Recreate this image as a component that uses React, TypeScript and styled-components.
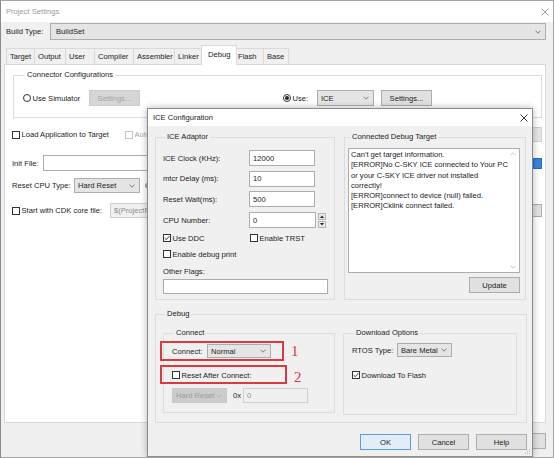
import React from "react";
import styled, { createGlobalStyle } from "styled-components";

const GlobalStyle = createGlobalStyle`
  html, body { margin: 0; padding: 0; background: #f0f0f0; }
  body {
    font-family: "Liberation Sans", Arial, sans-serif;
    font-size: 7.6px;
    color: #1b1b1b;
  }
  * { box-sizing: border-box; }
`;

/* ---------- window chrome ---------- */

const Window = styled.div`
  position: relative;
  width: 554px;
  height: 458px;
  border: 1px solid #a4a4a4;
  border-left-color: #8a8a8a;
  background: #f0f0f0;
  display: flex;
  flex-direction: column;
  overflow: hidden;
`;

const TitleBar = styled.div<{ $active?: boolean }>`
  flex: none;
  height: ${(p) => (p.$active ? 17 : 21)}px;
  display: flex;
  align-items: center;
  justify-content: space-between;
  padding: 0 4px 0 5px;
  background: #fff;
  color: ${(p) => (p.$active ? "#1b1b1b" : "#9a9a9a")};
`;

const CloseIcon = ({ color }: { color: string }) => (
  <svg width="8" height="8" viewBox="0 0 8 8">
    <path d="M0.5 0.5 L7.5 7.5 M7.5 0.5 L0.5 7.5" stroke={color} strokeWidth="0.9" />
  </svg>
);

const Chevron = ({ color = "#606060" }: { color?: string }) => (
  <svg width="6" height="4" viewBox="0 0 6 4">
    <path d="M0.5 0.7 L3 3.2 L5.5 0.7" stroke={color} strokeWidth="0.8" fill="none" />
  </svg>
);

/* ---------- common controls ---------- */

const Combo = styled.div<{ $w?: number; $h?: number; $disabled?: boolean }>`
  flex: ${(p) => (p.$w ? "none" : 1)};
  width: ${(p) => (p.$w ? `${p.$w}px` : "auto")};
  height: ${(p) => p.$h ?? 15}px;
  border: 1px solid ${(p) => (p.$disabled ? "#c9c9c9" : "#adadad")};
  background: ${(p) => (p.$disabled ? "#cccccc" : "#e5e5e5")};
  color: ${(p) => (p.$disabled ? "#9a9a9a" : "#1b1b1b")};
  display: flex;
  align-items: center;
  justify-content: space-between;
  padding: 0 4px 0 3px;
`;

const Field = styled.div<{ $w?: number; $h?: number; $disabled?: boolean; $mt?: number }>`
  flex: ${(p) => (p.$w ? "none" : 1)};
  width: ${(p) => (p.$w ? `${p.$w}px` : "auto")};
  height: ${(p) => p.$h ?? 16}px;
  margin-top: ${(p) => p.$mt ?? 0}px;
  border: 1px solid ${(p) => (p.$disabled ? "#cfcfcf" : "#abadb3")};
  background: ${(p) => (p.$disabled ? "#f0f0f0" : "#fff")};
  color: ${(p) => (p.$disabled ? "#8d8d8d" : "#1b1b1b")};
  display: flex;
  align-items: center;
  padding-left: 3px;
  white-space: nowrap;
  overflow: hidden;
`;

const Button = styled.div<{ $w?: number; $h?: number; $disabled?: boolean; $default?: boolean; $blue?: boolean }>`
  flex: none;
  width: ${(p) => p.$w ?? 51}px;
  height: ${(p) => p.$h ?? 16}px;
  border: 1px solid
    ${(p) => (p.$default ? "#5a9ee0" : p.$blue ? "#1f6fd0" : p.$disabled ? "#cccccc" : "#adadad")};
  background: ${(p) => (p.$default ? "#e3edf8" : p.$blue ? "#3a84dc" : p.$disabled ? "#d6d6d6" : "#e1e1e1")};
  color: ${(p) => (p.$disabled ? "#a3a3a3" : "#1b1b1b")};
  display: flex;
  align-items: center;
  justify-content: center;
`;

const Box = styled.span<{ $disabled?: boolean; $round?: boolean }>`
  flex: none;
  width: 8px;
  height: 8px;
  border: 1px solid ${(p) => (p.$disabled ? "#c4c4c4" : "#333")};
  border-radius: ${(p) => (p.$round ? "50%" : "0")};
  background: #fff;
  display: flex;
  align-items: center;
  justify-content: center;
`;

const Dot = styled.span`
  width: 4px;
  height: 4px;
  border-radius: 50%;
  background: #222;
`;

const Choice = styled.label<{ $disabled?: boolean; $w?: number; $mt?: number }>`
  flex: none;
  display: flex;
  align-items: center;
  gap: 1.5px;
  height: 10px;
  width: ${(p) => (p.$w ? `${p.$w}px` : "auto")};
  margin-top: ${(p) => p.$mt ?? 0}px;
  color: ${(p) => (p.$disabled ? "#a8a8a8" : "inherit")};
  white-space: nowrap;
`;

type ChoiceProps = { label: string; checked?: boolean; disabled?: boolean; w?: number; mt?: number };

const Check = ({ label, checked, disabled, w, mt }: ChoiceProps) => (
  <Choice $disabled={disabled} $w={w} $mt={mt}>
    <Box $disabled={disabled}>
      {checked && (
        <svg width="6" height="6" viewBox="0 0 6 6">
          <path d="M0.6 3.1 L2.3 4.7 L5.4 1.1" stroke="#222" strokeWidth="0.9" fill="none" />
        </svg>
      )}
    </Box>
    {label}
  </Choice>
);

const Radio = ({ label, checked, w }: ChoiceProps) => (
  <Choice $w={w}>
    <Box $round>{checked && <Dot />}</Box>
    {label}
  </Choice>
);

const Row = styled.div<{ $h?: number; $mt?: number; $gap?: number; $top?: boolean }>`
  display: flex;
  align-items: ${(p) => (p.$top ? "flex-start" : "center")};
  height: ${(p) => p.$h ?? 16}px;
  margin-top: ${(p) => p.$mt ?? 0}px;
  gap: ${(p) => p.$gap ?? 0}px;
`;

const Label = styled.span<{ $w?: number; $ml?: number }>`
  flex: none;
  width: ${(p) => (p.$w ? `${p.$w}px` : "auto")};
  margin-left: ${(p) => p.$ml ?? 0}px;
  white-space: nowrap;
`;

const Group = styled.fieldset<{ $w?: number; $h: number; $pad: string; $mt?: number; $ml?: number }>`
  flex: none;
  margin: ${(p) => p.$mt ?? 0}px 0 0 ${(p) => p.$ml ?? 0}px;
  width: ${(p) => (p.$w ? `${p.$w}px` : "auto")};
  height: ${(p) => p.$h}px;
  min-width: 0;
  padding: ${(p) => p.$pad};
  border: 1px solid #dcdcdc;
`;

const Legend = styled.legend`
  padding: 0 2px;
  margin-left: 2px;
  line-height: 10px;
`;

/* ---------- background window ---------- */

const BuildRow = styled.div`
  flex: none;
  display: flex;
  align-items: center;
  height: 17px;
  margin: 1px 7px 0 5px;
`;

const TabStrip = styled.div`
  flex: none;
  position: relative;
  z-index: 1;
  display: flex;
  align-items: flex-end;
  height: 19px;
  margin-top: 5px;
  padding-left: 5px;
`;

const Tab = styled.div<{ $w: number; $selected?: boolean }>`
  flex: none;
  width: ${(p) => p.$w + (p.$selected ? 4 : 0)}px;
  height: ${(p) => (p.$selected ? 20 : 16)}px;
  margin-left: ${(p) => (p.$selected ? -3 : -1)}px;
  margin-right: ${(p) => (p.$selected ? -2 : 0)}px;
  margin-bottom: ${(p) => (p.$selected ? -1 : 0)}px;
  padding: ${(p) => (p.$selected ? "0 0 2px 6px" : "0 0 0 3px")};
  border: 1px solid #d9d9d9;
  border-bottom: none;
  background: ${(p) => (p.$selected ? "#fff" : "#f0f0f0")};
  position: relative;
  z-index: ${(p) => (p.$selected ? 2 : 0)};
  display: flex;
  align-items: center;
  &:first-child {
    margin-left: 0;
  }
`;

const Panel = styled.div`
  flex: none;
  height: 359px;
  margin: 0 7px 0 3px;
  padding: 5px 3px 0 7px;
  background: #fff;
  border: 1px solid #d9d9d9;
  display: flex;
  flex-direction: column;
`;

const BottomBar = styled.div`
  display: flex;
  justify-content: flex-end;
  gap: 7px;
  margin-top: 10px;
  padding-right: 7px;
`;

const tabs = [
  { name: "Target", w: 29 },
  { name: "Output", w: 32 },
  { name: "User", w: 30 },
  { name: "Compiler", w: 40 },
  { name: "Assembler", w: 42 },
  { name: "Linker", w: 30 },
  { name: "Debug", w: 32, selected: true },
  { name: "Flash", w: 30 },
  { name: "Base", w: 26 },
];

/* ---------- ICE dialog ---------- */

const Dialog = styled.div`
  position: absolute;
  left: 146px;
  top: 107px;
  width: 386px;
  height: 349px;
  border: 1px solid #8c8c8c;
  background: #f0f0f0;
  box-shadow: 0 0 7px rgba(0, 0, 0, 0.3);
  display: flex;
  flex-direction: column;
  z-index: 5;
`;

const DialogBody = styled.div`
  flex: 1;
  padding: 6px 5px 0 7px;
  display: flex;
  flex-direction: column;
`;

const TopRow = styled.div`
  display: flex;
  gap: 9px;
`;

const FieldGrid = styled.div`
  display: grid;
  grid-template-columns: 86px auto;
  grid-auto-rows: 16px;
  row-gap: 4.7px;
  align-items: center;
`;

const Spin = styled.div`
  display: flex;
  flex-direction: column;
  gap: 1px;
  margin-left: 2px;
`;

const SpinButton = styled.div`
  width: 8px;
  height: 7px;
  border: 1px solid #b4b4b4;
  background: #e9e9e9;
  display: flex;
  align-items: center;
  justify-content: center;
`;

const TextArea = styled.div`
  position: relative;
  width: 172px;
  height: 125px;
  border: 1px solid #abadb3;
  background: #fff;
  padding: 1px 14px 0 2px;
  line-height: 10.3px;
  white-space: pre;
`;

const ScrollTrack = styled.div`
  position: absolute;
  right: 0;
  top: 0;
  bottom: 0;
  width: 12px;
  display: flex;
  flex-direction: column;
  justify-content: space-between;
  align-items: center;
  padding: 3px 0;
`;

const RightRow = styled.div`
  display: flex;
  justify-content: flex-end;
  width: 172px;
  margin-top: 4px;
`;

const ButtonRow = styled.div`
  display: flex;
  justify-content: flex-end;
  gap: 7px;
  margin-top: 11px;
`;

const Mark = styled.div<{ $l: number; $t: number; $w: number; $h: number }>`
  position: absolute;
  left: ${(p) => p.$l}px;
  top: ${(p) => p.$t}px;
  width: ${(p) => p.$w}px;
  height: ${(p) => p.$h}px;
  border: 2px solid #d93a3f;
  pointer-events: none;
`;

const MarkNumber = styled.div<{ $l: number; $t: number }>`
  position: absolute;
  left: ${(p) => p.$l}px;
  top: ${(p) => p.$t}px;
  font-family: "Liberation Serif", "Times New Roman", serif;
  font-size: 15px;
  line-height: 15px;
  color: #d93a3f;
`;

const Grip = styled.svg`
  position: absolute;
  right: 1px;
  bottom: 1px;
`;

const debugText = [
  "Can't get target information.",
  "[ERROR]No C-SKY ICE connected to Your PC",
  "or your C-SKY ICE driver not installed",
  "correctly!",
  "[ERROR]connect to device (null) failed.",
  "[ERROR]Cklink connect failed.",
].join("\n");

const Arrow = ({ up }: { up?: boolean }) => (
  <svg width="6" height="4" viewBox="0 0 6 4">
    <path d={up ? "M0.5 3.3 L3 0.8 L5.5 3.3" : "M0.5 0.7 L3 3.2 L5.5 0.7"} stroke="#b8b8b8" strokeWidth="0.8" fill="none" />
  </svg>
);

const Tri = ({ up }: { up?: boolean }) => (
  <svg width="4" height="3" viewBox="0 0 4 3">
    <path d={up ? "M0 3 L2 0.5 L4 3 Z" : "M0 0 L2 2.5 L4 0 Z"} fill="#222" />
  </svg>
);

const IceDialog = () => (
  <Dialog>
    <TitleBar $active>
      <span>ICE Configuration</span>
      <CloseIcon color="#222" />
    </TitleBar>
    <DialogBody>
      <TopRow>
        <Group $w={180} $h={168} $pad="8px 0 0 7px">
          <Legend>ICE Adaptor</Legend>
          <FieldGrid>
            <Label>ICE Clock (KHz):</Label>
            <Field $w={66}>12000</Field>
            <Label>mtcr Delay (ms):</Label>
            <Field $w={66}>10</Field>
            <Label>Reset Wait(ms):</Label>
            <Field $w={66}>500</Field>
            <Label>CPU Number:</Label>
            <Row>
              <Field $w={67}>0</Field>
              <Spin>
                <SpinButton>
                  <Tri up />
                </SpinButton>
                <SpinButton>
                  <Tri />
                </SpinButton>
              </Spin>
            </Row>
          </FieldGrid>
          <Row $h={10} $mt={5}>
            <Check label="Use DDC" checked w={87} />
            <Check label="Enable TRST" />
          </Row>
          <Check label="Enable debug print" mt={6} />
          <Row $h={10} $mt={7}>
            <Label>Other Flags:</Label>
          </Row>
          <Field $w={165} $h={15} $mt={3} />
        </Group>

        <Group $w={182} $h={168} $pad="6px 0 0 3px">
          <Legend>Connected Debug Target</Legend>
          <TextArea>
            {debugText}
            <ScrollTrack>
              <Arrow up />
              <Arrow />
            </ScrollTrack>
          </TextArea>
          <RightRow>
            <Button>Update</Button>
          </RightRow>
        </Group>
      </TopRow>

      <Group $h={114} $pad="9px 0 0 7px" $mt={9}>
        <Legend>Debug</Legend>
        <Row $h={87} $top>
          <Group $w={172} $h={85} $pad="6px 0 0 8px">
            <Legend>Connect</Legend>
            <Row $h={14}>
              <Label $w={35}>Connect:</Label>
              <Combo $w={64} $h={14}>
                Normal
                <Chevron />
              </Combo>
            </Row>
            <Check label="Reset After Connect:" mt={12} />
            <Row $h={15} $mt={8}>
              <Combo $w={55} $disabled>
                Hard Reset
                <Chevron color="#a8a8a8" />
              </Combo>
              <Label $ml={6}>0x</Label>
              <Field $w={65} $h={15} $disabled style={{ marginLeft: 2 }}>
                0
              </Field>
            </Row>
          </Group>
          <Group $w={174} $h={87} $pad="5px 0 0 8px" $ml={8}>
            <Legend>Download Options</Legend>
            <Row $h={14}>
              <Label $w={45}>RTOS Type:</Label>
              <Combo $w={55} $h={14}>
                Bare Metal
                <Chevron />
              </Combo>
            </Row>
            <Check label="Download To Flash" checked mt={13} />
          </Group>
        </Row>
      </Group>

      <ButtonRow>
        <Button $default>OK</Button>
        <Button>Cancel</Button>
        <Button>Help</Button>
      </ButtonRow>
    </DialogBody>

    <Mark $l={12} $t={232} $w={124} $h={20} />
    <MarkNumber $l={143} $t={235}>1</MarkNumber>
    <Mark $l={12} $t={256} $w={127} $h={19} />
    <MarkNumber $l={146} $t={261}>2</MarkNumber>

    <Grip width="6" height="6" viewBox="0 0 6 6">
      <g fill="#b5b5b5">
        <rect x="4" y="0" width="1" height="1" />
        <rect x="2" y="2" width="1" height="1" />
        <rect x="4" y="2" width="1" height="1" />
        <rect x="0" y="4" width="1" height="1" />
        <rect x="2" y="4" width="1" height="1" />
        <rect x="4" y="4" width="1" height="1" />
      </g>
    </Grip>
  </Dialog>
);

export default function App() {
  return (
    <>
      <GlobalStyle />
      <Window>
        <TitleBar>
          <span>Project Settings</span>
          <CloseIcon color="#9a9a9a" />
        </TitleBar>

        <BuildRow>
          <Label $w={44}>Build Type:</Label>
          <Combo $h={17} style={{ paddingLeft: 5 }}>
            BuildSet
            <Chevron />
          </Combo>
        </BuildRow>

        <TabStrip>
          {tabs.map((t) => (
            <Tab key={t.name} $w={t.w} $selected={t.selected}>
              {t.name}
            </Tab>
          ))}
        </TabStrip>

        <Panel>
          <Group $h={48} $pad="10px 0 0 9px" $ml={1}>
            <Legend>Connector Configurations</Legend>
            <Row>
              <Radio label="Use Simulator" w={66} />
              <Button $disabled>Settings...</Button>
              <Label $ml={143}>
                <Radio label="Use:" checked w={34} />
              </Label>
              <Combo $w={57} $h={16}>
                ICE
                <Chevron />
              </Combo>
              <Button style={{ marginLeft: 7 }}>Settings...</Button>
            </Row>
          </Group>

          <Row $h={15} $mt={9}>
            <Check label="Load Application to Target" w={113} />
            <Check label="Auto Run" disabled />
            <Field $w={70} $h={15} $disabled style={{ marginLeft: "auto", background: "#e6e6e6" }} />
          </Row>

          <Row $mt={13}>
            <Label $w={31}>Init File:</Label>
            <Field />
            <Button $w={9} $h={11} $blue style={{ marginLeft: 2 }} />
          </Row>

          <Row $h={15} $mt={7}>
            <Label $w={62}>Reset CPU Type:</Label>
            <Combo $w={66}>
              Hard Reset
              <Chevron />
            </Combo>
            <Label $ml={5}>Core</Label>
          </Row>

          <Row $h={15} $mt={10}>
            <Check label="Start with CDK core file:" w={98} />
            <Field $h={15} $disabled>
              $(ProjectPath)/cdk_core.elf
            </Field>
            <Button $w={10} $h={13} style={{ marginLeft: 2 }} />
          </Row>
        </Panel>

        <BottomBar>
          <Button />
          <Button />
          <Button $w={14} />
        </BottomBar>

        <IceDialog />
      </Window>
    </>
  );
}
